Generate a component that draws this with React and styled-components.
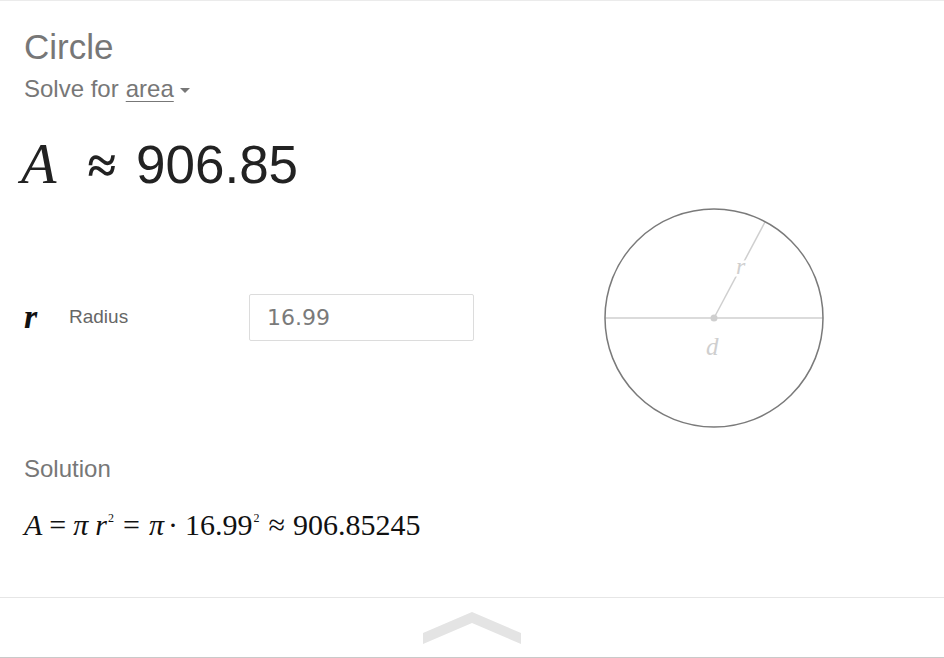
import React from 'react';
import styled, { createGlobalStyle } from 'styled-components';

const Global = createGlobalStyle`
  html, body { margin: 0; padding: 0; background: #fff; }
  body { font-family: "Liberation Sans", Arial, sans-serif; }
`;

const Card = styled.div`
  box-sizing: border-box;
  height: 658px;
  border-top: 1px solid #ebebeb;
  border-bottom: 1px solid #c9c9c9;
  display: flex;
  flex-direction: column;
`;

const Main = styled.div`
  flex: 1;
  display: flex;
  padding-top: 28px;
`;

const Left = styled.div`
  box-sizing: border-box;
  width: 594px;
  padding-left: 24px;
`;

const Right = styled.div`
  padding-top: 169px;
`;

const Title = styled.div`
  font-size: 35px;
  line-height: 36px;
  color: #777;
`;

const SolveFor = styled.div`
  margin-top: 11px;
  font-size: 24px;
  line-height: 26px;
  color: #777;
  display: flex;
  align-items: center;
`;

const Target = styled.span`
  margin-left: 7px;
  text-decoration: underline;
  text-underline-offset: 4px;
  text-decoration-thickness: 1px;
`;

const Caret = styled.span`
  margin-left: 6px;
  margin-top: 2px;
  width: 0;
  height: 0;
  border-left: 5px solid transparent;
  border-right: 5px solid transparent;
  border-top: 5px solid #777;
`;

const Result = styled.div`
  margin-top: 32px;
  margin-left: -3px;
  height: 60px;
  line-height: 60px;
  display: flex;
  align-items: baseline;
  color: #222;
`;

const MathVar = styled.span`
  font-family: "Liberation Serif", "Times New Roman", serif;
  font-style: italic;
  font-size: ${p => p.size || 56}px;
  font-weight: ${p => (p.bold ? 700 : 400)};
`;

const Approx = styled.span`
  font-family: "Liberation Serif", "Times New Roman", serif;
  font-size: 52px;
  font-weight: 700;
  margin: 0 20px 0 31px;
`;

const Value = styled.span`
  font-size: 53px;
`;

const InputRow = styled.div`
  margin-top: 100px;
  height: 46px;
  display: flex;
  align-items: center;
`;

const VarCell = styled.div`
  width: 45px;
  color: #111;
`;

const LabelCell = styled.div`
  width: 180px;
  font-size: 19px;
  color: #666;
`;

const Field = styled.input`
  box-sizing: border-box;
  width: 225px;
  height: 47px;
  border: 1px solid #dcdcdc;
  border-radius: 2px;
  padding: 0 0 0 17px;
  font-family: "DejaVu Sans", sans-serif;
  font-size: 22px;
  color: #7a7a7a;
  outline: none;
  background: #fff;
`;

const SectionLabel = styled.div`
  margin-top: 116px;
  font-size: 24px;
  line-height: 26px;
  color: #777;
`;

const Formula = styled.div`
  margin-top: 26px;
  font-family: "Liberation Serif", "Times New Roman", serif;
  font-size: 30px;
  line-height: 34px;
  color: #111;
  white-space: nowrap;
`;

const Sym = styled.span`
  font-style: ${p => (p.upright ? 'normal' : 'italic')};
  margin-left: ${p => p.gap || 0}px;
`;

const Op = styled.span`
  margin: 0 ${p => p.right ?? 7}px 0 ${p => p.left ?? 7}px;
`;

const Sup = styled.sup`
  font-size: 12px;
  line-height: 0;
  vertical-align: 13px;
  margin-left: 1px;
`;

const Footer = styled.div`
  height: 60px;
  border-top: 1px solid #e6e6e6;
  display: flex;
  justify-content: center;
  padding-top: 14px;
  box-sizing: border-box;
`;

function CircleDiagram() {
  return (
    <svg width="240" height="240" viewBox="0 0 240 240">
      <line x1="11" y1="120" x2="229" y2="120" stroke="#cfcfcf" strokeWidth="1.5" />
      <line x1="120" y1="120" x2="171" y2="24" stroke="#cfcfcf" strokeWidth="1.5" />
      <circle cx="120" cy="120" r="109" fill="none" stroke="#7a7a7a" strokeWidth="1.5" />
      <circle cx="120" cy="120" r="3.5" fill="#cfcfcf" />
      <text
        x="142" y="76"
        fontFamily="Liberation Serif, serif" fontStyle="italic" fontSize="24"
        fill="#cfcfcf" stroke="#fff" strokeWidth="5" paintOrder="stroke"
      >r</text>
      <text
        x="112" y="157"
        fontFamily="Liberation Serif, serif" fontStyle="italic" fontSize="25"
        fill="#cfcfcf"
      >d</text>
    </svg>
  );
}

function Chevron() {
  return (
    <svg width="98" height="34" viewBox="0 0 98 34">
      <polygon points="0,21 49,0 98,21 98,32 49,11 0,32" fill="#e4e4e4" />
    </svg>
  );
}

export default function App() {
  return (
    <>
      <Global />
      <Card>
        <Main>
          <Left>
            <Title>Circle</Title>
            <SolveFor>
              Solve for <Target>area</Target><Caret />
            </SolveFor>
            <Result>
              <MathVar size={58}>A</MathVar>
              <Approx>≈</Approx>
              <Value>906.85</Value>
            </Result>
            <InputRow>
              <VarCell><MathVar size={34} bold>r</MathVar></VarCell>
              <LabelCell>Radius</LabelCell>
              <Field defaultValue="16.99" readOnly />
            </InputRow>
            <SectionLabel>Solution</SectionLabel>
            <Formula>
              <Sym>A</Sym>
              <Op>=</Op>
              <Sym>π</Sym>
              <Sym gap={7}>r</Sym>
              <Sup>2</Sup>
              <Op left={9} right={9}>=</Op>
              <Sym>π</Sym>
              <Op left={4} right={7}>·</Op>
              <Sym upright>16.99</Sym>
              <Sup>2</Sup>
              <Op left={9} right={8}>≈</Op>
              <Sym upright>906.85245</Sym>
            </Formula>
          </Left>
          <Right>
            <CircleDiagram />
          </Right>
        </Main>
        <Footer>
          <Chevron />
        </Footer>
      </Card>
    </>
  );
}
